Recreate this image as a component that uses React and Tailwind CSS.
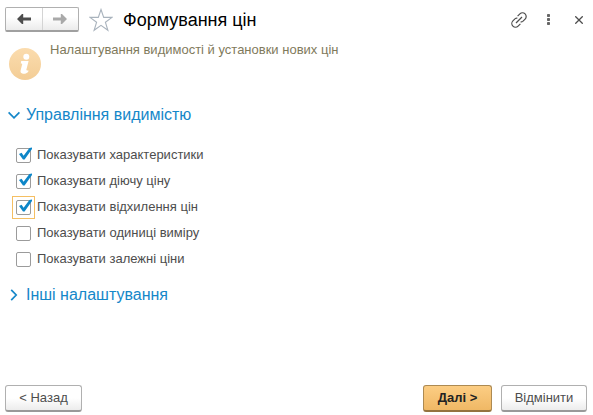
import { useState } from 'react';

const OPTIONS = [
  { id: 'features', label: 'Показувати характеристики', checked: true },
  { id: 'current', label: 'Показувати діючу ціну', checked: true },
  { id: 'deviation', label: 'Показувати відхилення цін', checked: true },
  { id: 'units', label: 'Показувати одиниці виміру', checked: false },
  { id: 'dependent', label: 'Показувати залежні ціни', checked: false },
];

function Arrow({ className }) {
  return (
    <svg viewBox="0 0 14 12" className={`h-3 w-[14px] ${className}`}>
      <path d="M0 6 5 1 6.2 1 6.2 4.5H14V7.5H6.2V11H5Z" fill="currentColor" />
    </svg>
  );
}

function Header() {
  return (
    <header className="flex h-[25px] items-center">
      <div className="flex h-[25px] w-[74px] rounded-xs border border-[#b0b0b0] border-b-2 border-b-[#a0a0a0] bg-linear-to-b from-white from-40% to-[#ebebeb]">
        <button aria-label="Назад" className="flex flex-1 items-center justify-center border-r border-[#d4d4d4]">
          <Arrow className="text-[#4d4d4d]" />
        </button>
        <button aria-label="Вперед" className="flex flex-1 items-center justify-center">
          <Arrow className="rotate-180 text-[#a9a9a9]" />
        </button>
      </div>
      <button aria-label="В обране" className="ml-[10px]">
        <svg viewBox="0 0 24 24" className="h-6 w-6">
          <path
            d="M12 1.5 14.7 9.4H23L16.4 14.2 18.9 22.3 12 17.4 5.1 22.3 7.6 14.2 1 9.4H9.3Z"
            fill="none"
            stroke="#a9b3bd"
            strokeWidth="1.1"
          />
        </svg>
      </button>
      <h1 className="ml-[10px] text-[18px] leading-6 text-black">Формування цін</h1>
      <div className="ml-auto flex items-center text-[#4d4d4d]">
        <button aria-label="Посилання">
          <svg viewBox="0 0 16 16" className="h-4 w-4" fill="none" stroke="currentColor" strokeWidth="1.2">
            <path d="M5 11 11 5" />
            <path d="M6.6 4.2 8.9 1.9a3.4 3.4 0 0 1 5.2 5.2L11.8 9.4q-1 .8-2.2.4" />
            <path d="M9.4 11.8 7.1 14.1A3.4 3.4 0 0 1 1.9 8.9L4.2 6.6q1-.8 2.2-.4" />
          </svg>
        </button>
        <button aria-label="Ще" className="ml-4">
          <svg viewBox="0 0 12 12" className="h-3 w-3" fill="#666666">
            <rect x="4" y="0" width="3" height="3" rx="0.7" />
            <rect x="4" y="4" width="3" height="3" rx="0.7" />
            <rect x="4" y="8" width="3" height="3" rx="0.7" />
          </svg>
        </button>
        <button aria-label="Закрити" className="ml-5">
          <svg viewBox="0 0 8 8" className="h-2 w-2" fill="none" stroke="currentColor" strokeWidth="1.3">
            <path d="M0.3 0.3l7.4 7.4M7.7 0.3l-7.4 7.4" />
          </svg>
        </button>
      </div>
    </header>
  );
}

function Option({ id, label, checked, focused, onChange, onFocus }) {
  return (
    <div className="flex h-[26px] items-center">
      <span
        className={`relative flex h-[23px] w-[23px] items-center justify-center border ${
          focused ? 'border-[#f5bf62]' : 'border-transparent'
        }`}
      >
        <input
          id={id}
          type="checkbox"
          checked={checked}
          onChange={onChange}
          onFocus={onFocus}
          className="h-[15px] w-[15px] appearance-none rounded-xs border border-[#9b9b9b] bg-white outline-none"
        />
        {checked && (
          <svg viewBox="0 0 17 17" className="pointer-events-none absolute top-[2px] left-[3px] h-[17px] w-[17px]">
            <path d="M3 7 5.6 5.8 7.6 8.8 13.4 1 16 0.4V2L8.6 12.6H7Z" fill="#0d86c8" />
          </svg>
        )}
      </span>
      <label htmlFor={id} className="ml-[2px]">
        {label}
      </label>
    </div>
  );
}

function SectionTitle({ open, onClick, children }) {
  return (
    <h2>
      <button
        aria-expanded={open}
        onClick={onClick}
        className="flex items-center text-[16px] leading-5 text-[#1587c9]"
      >
        <svg viewBox="0 0 12 12" className="mr-[6px] ml-[3px] h-3 w-3" fill="none" stroke="currentColor" strokeWidth="1.7">
          <path d={open ? 'M0.6 3.4 6 8.8l5.4-5.4' : 'M3.2 0.8 8.2 6l-5 5.2'} />
        </svg>
        {children}
      </button>
    </h2>
  );
}

function App() {
  const [options, setOptions] = useState(OPTIONS);
  const [focused, setFocused] = useState('deviation');
  const [open, setOpen] = useState(true);
  const [otherOpen, setOtherOpen] = useState(false);

  const toggle = (id) => {
    setOptions(options.map((o) => (o.id === id ? { ...o, checked: !o.checked } : o)));
  };

  return (
    <div className="flex min-h-screen flex-col bg-white px-[5px] pt-[7px] pb-[3px] font-['Liberation_Sans',Arial,sans-serif] text-[13px] leading-4 text-[#4d4d4d]">
      <div className="pr-[5px]">
        <Header />
      </div>

      <div className="mt-[10px] flex items-start pl-1">
        <svg viewBox="0 0 32 32" className="mt-[6px] h-8 w-8 shrink-0">
          <defs>
            <linearGradient id="info" x1="0" y1="0" x2="0" y2="1">
              <stop offset="0" stopColor="#fbdcae" />
              <stop offset="1" stopColor="#f3cd96" />
            </linearGradient>
          </defs>
          <circle cx="16" cy="16" r="16" fill="url(#info)" />
          <circle cx="17.3" cy="8.8" r="3" fill="#fff" />
          <path
            d="M12.2 13H19.6L17.4 21.6C17.2 22.4 17.6 22.6 19.4 22.2L19.2 24C17.4 25.4 15.6 26 14 25.8C12 25.6 11.2 24.4 11.6 22.6L13.2 16.2C13.3 15.7 13 15.4 11.8 15.4Z"
            fill="#fff"
          />
        </svg>
        <p className="ml-[9px] text-[#7f7a5c]">Налаштування видимості й установки нових цін</p>
      </div>

      <main className="mt-[25px]">
        <SectionTitle open={open} onClick={() => setOpen(!open)}>
          Управління видимістю
        </SectionTitle>
        {open && (
          <div className="mt-[17px] mb-[13px] pl-[7px]">
            {options.map((o) => (
              <Option
                key={o.id}
                {...o}
                focused={focused === o.id}
                onChange={() => toggle(o.id)}
                onFocus={() => setFocused(o.id)}
              />
            ))}
          </div>
        )}
        <SectionTitle open={otherOpen} onClick={() => setOtherOpen(!otherOpen)}>
          Інші налаштування
        </SectionTitle>
      </main>

      <footer className="mt-auto flex">
        <button className="h-[27px] w-[77px] rounded-[3px] border border-[#b0b0b0] border-b-2 border-b-[#999999] bg-linear-to-b from-white from-50% to-[#ececec]">
          &lt; Назад
        </button>
        <button className="ml-auto h-[27px] w-[69px] rounded-[3px] border border-[#ad8a52] border-b-2 border-b-[#94733f] bg-linear-to-b from-[#fccd83] to-[#f0b865] font-bold text-[#222222]">
          Далі &gt;
        </button>
        <button className="mr-px ml-[9px] h-[27px] w-[86px] rounded-[3px] border border-[#b0b0b0] border-b-2 border-b-[#999999] bg-linear-to-b from-white from-50% to-[#ececec]">
          Відмінити
        </button>
      </footer>
    </div>
  );
}

export default App;
